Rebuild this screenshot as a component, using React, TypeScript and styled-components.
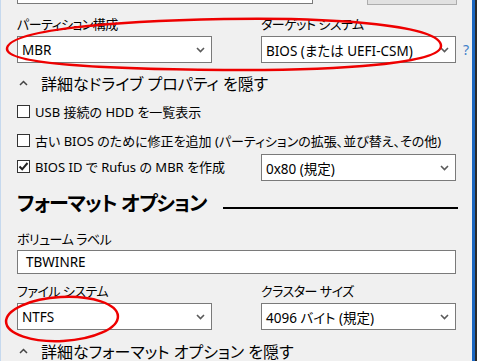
import styled, { createGlobalStyle } from "styled-components"

const GlobalStyle = createGlobalStyle`
    html, body {
        margin: 0;
        padding: 0;
        background: #f0f0f0;
    }
    * {
        box-sizing: border-box;
    }
`

const FONT = `"Noto Sans", "Noto Sans CJK JP", sans-serif`

function Chevron() {
    return (
        <svg width="9" height="6" viewBox="0 0 9 6">
            <path d="M1 1 L4.5 4.5 L8 1" fill="none" stroke="#5a5a5a" strokeWidth="1.6" />
        </svg>
    )
}

function Caret() {
    return (
        <svg width="9" height="6" viewBox="0 0 9 6">
            <path d="M1 5 L4.5 1.5 L8 5" fill="none" stroke="#444" strokeWidth="1.5" />
        </svg>
    )
}

function Combo({ value }: { value: string }) {
    return (
        <ComboBox>
            <span>{value}</span>
            <Chevron />
        </ComboBox>
    )
}

function Check({ label, checked }: { label: string, checked?: boolean }) {
    return (
        <CheckRow>
            <Box>
                {checked && (
                    <svg width="11" height="11" viewBox="0 0 11 11">
                        <path d="M1.5 5.5 L4.2 8.3 L9.5 2" fill="none" stroke="#222" strokeWidth="2" />
                    </svg>
                )}
            </Box>
            <span>{label}</span>
        </CheckRow>
    )
}

export default function App() {
    return (
        <Frame>
            <GlobalStyle />
            <Panel>
                <TopRow>
                    <TopField />
                    <TopButton />
                </TopRow>

                <FieldRow top={10}>
                    <Field>
                        <Label>パーティション構成</Label>
                        <Combo value="MBR" />
                    </Field>
                    <Field right>
                        <Label>ターゲット システム</Label>
                        <Combo value="BIOS (または UEFI-CSM)" />
                    </Field>
                    <Help>?</Help>
                </FieldRow>

                <Toggle top={10}>
                    <Caret />
                    <span>詳細なドライブ プロパティ を隠す</span>
                </Toggle>

                <Line top={8}>
                    <Check label="USB 接続の HDD を一覧表示" />
                </Line>
                <Line top={9}>
                    <Check label="古い BIOS のために修正を追加 (パーティションの拡張、並び替え、その他)" />
                </Line>
                <Line top={4}>
                    <CheckCell>
                        <Check label="BIOS ID で Rufus の MBR を作成" checked />
                    </CheckCell>
                    <SmallCombo>
                        <Combo value="0x80 (規定)" />
                    </SmallCombo>
                </Line>

                <Heading>
                    <HeadingText>フォーマット オプション</HeadingText>
                    <Rule />
                </Heading>

                <Label style={{ marginTop: 12 }}>ボリューム ラベル</Label>
                <TextInput>TBWINRE</TextInput>

                <FieldRow top={8}>
                    <Field>
                        <Label>ファイル システム</Label>
                        <Combo value="NTFS" />
                    </Field>
                    <Field right>
                        <Label>クラスター サイズ</Label>
                        <Combo value="4096 バイト (規定)" />
                    </Field>
                </FieldRow>

                <Toggle top={11}>
                    <Caret />
                    <span>詳細なフォーマット オプション を隠す</span>
                </Toggle>
            </Panel>
            <EdgeBar />

            <Marks viewBox="0 0 477 361">
                <path
                    d="M 6 49 C 6 30, 110 21, 223 19 C 340 17, 440 26, 440 46 C 440 63, 340 71, 223 70 C 100 69, 6 64, 6 49 Z"
                    fill="none"
                    stroke="#ee0000"
                    strokeWidth="2.5"
                />
                <ellipse cx="61" cy="319" rx="56" ry="22" transform="rotate(-3 61 319)" fill="none" stroke="#ee0000" strokeWidth="2.5" />
            </Marks>
        </Frame>
    )
}

const Frame = styled.div`
    position: relative;
    width: 477px;
    height: 361px;
    overflow: hidden;
    display: flex;
    background: #f0f0f0;
    border-left: 1px solid #c6d9ee;
    font-family: ${FONT};
    font-feature-settings: "palt";
    color: #000;
`

const Panel = styled.div`
    flex: 1;
    display: flex;
    flex-direction: column;
    padding-left: 16px;
`

const EdgeBar = styled.div`
    width: 5px;
    background: #1c67c0;
    border-right: 2px solid #2a2a2a;
`

const TopRow = styled.div`
    display: flex;
    align-items: flex-start;
    height: 5px;
`

const TopField = styled.div`
    width: 296px;
    height: 4px;
    background: #fff;
    border: 1px solid #7a7a7a;
    border-top: none;
`

const TopButton = styled.div`
    width: 90px;
    height: 5px;
    margin-left: 54px;
    background: #e1e1e1;
    border: 1px solid #adadad;
    border-top: none;
`

const FieldRow = styled.div<{ top: number }>`
    display: flex;
    align-items: flex-end;
    margin-top: ${props => props.top}px;
`

const Field = styled.div<{ right?: boolean }>`
    width: 195px;
    display: flex;
    flex-direction: column;
    gap: 3px;
    margin-left: ${props => props.right ? 49 : 0}px;
`

const Label = styled.div`
    font-size: 13px;
    letter-spacing: -0.5px;
    line-height: 18px;
    height: 18px;
    white-space: nowrap;
`

const ComboBox = styled.div`
    height: 27px;
    display: flex;
    align-items: center;
    justify-content: space-between;
    padding: 0 6px 0 4px;
    background: #fff;
    border: 1px solid #7a7a7a;
    font-size: 13.5px;
    white-space: nowrap;
`

const Help = styled.div`
    height: 27px;
    line-height: 27px;
    margin-left: 7px;
    font-size: 14px;
    color: #3f7fc9;
`

const Toggle = styled.div<{ top: number }>`
    display: flex;
    align-items: center;
    gap: 13px;
    height: 20px;
    padding-left: 2px;
    margin-top: ${props => props.top}px;
    font-size: 16px;
    white-space: nowrap;
`

const Line = styled.div<{ top: number }>`
    display: flex;
    align-items: center;
    margin-top: ${props => props.top}px;
`

const CheckRow = styled.div`
    display: flex;
    align-items: center;
    gap: 5px;
    height: 20px;
    font-size: 13px;
    white-space: nowrap;
`

const Box = styled.div`
    width: 13px;
    height: 13px;
    flex: none;
    display: flex;
    align-items: center;
    justify-content: center;
    background: #fff;
    border: 1px solid #333;
`

const CheckCell = styled.div`
    width: 244px;
    margin-top: -2px;
`

const SmallCombo = styled.div`
    width: 195px;
`

const Heading = styled.div`
    display: flex;
    align-items: center;
    height: 28px;
    margin-top: 9px;
`

const HeadingText = styled.div`
    font-size: 20px;
    font-weight: 700;
    letter-spacing: -1px;
    line-height: 28px;
    white-space: nowrap;
`

const Rule = styled.div`
    flex: 1;
    height: 2px;
    margin: 8px 14px 0 17px;
    background: #000;
`

const TextInput = styled.div`
    width: 439px;
    height: 27px;
    margin-top: 2px;
    padding-left: 8px;
    display: flex;
    align-items: center;
    background: #fff;
    border: 1px solid #7a7a7a;
    font-size: 13.5px;
`

const Marks = styled.svg`
    position: absolute;
    inset: 0;
    width: 477px;
    height: 361px;
    pointer-events: none;
`
